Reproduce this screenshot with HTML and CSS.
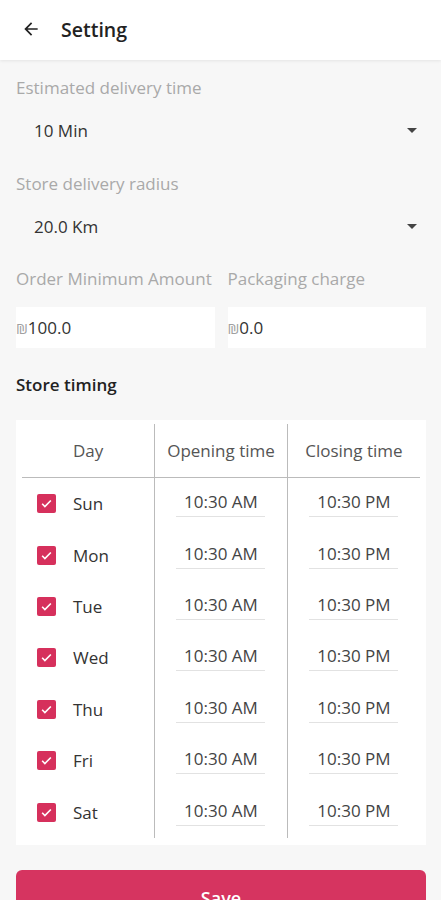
FILE: index.html
```html
<!DOCTYPE html>
<html lang="en">
    <head>
        <meta charset="UTF-8">
        <title>Setting</title>
        <link rel="stylesheet" href="styles.css">
    </head>
<body>

<div class="appbar">
    <svg class="back" width="20" height="20" viewBox="0 0 24 24"><path d="M20 11H7.83l5.59-5.59L12 4l-8 8 8 8 1.41-1.41L7.83 13H20v-2z" fill="#222"/></svg>
    <span class="title">Setting</span>
</div>

<div class="content">
    <div class="label first">Estimated delivery time</div>
    <div class="select">
        <span>10 Min</span>
        <span class="caret"></span>
    </div>

    <div class="label">Store delivery radius</div>
    <div class="select">
        <span>20.0 Km</span>
        <span class="caret"></span>
    </div>

    <div class="pair">
        <div class="pair-item">
            <div class="label">Order Minimum Amount</div>
            <div class="input"><span class="cur">₪</span>100.0</div>
        </div>
        <div class="pair-item">
            <div class="label">Packaging charge</div>
            <div class="input"><span class="cur">₪</span>0.0</div>
        </div>
    </div>

    <div class="section-title">Store timing</div>

    <div class="card">
        <table id="timingTable">
            <thead>
                <tr>
                    <th>Day</th>
                    <th>Opening time</th>
                    <th>Closing time</th>
                </tr>
            </thead>
            <tbody>
                <!-- rows filled by script -->
            </tbody>
        </table>
    </div>

    <button class="save">Save</button>
</div>

<script>
    const days = ['Sun', 'Mon', 'Tue', 'Wed', 'Thu', 'Fri', 'Sat'];

    const tbody = document.querySelector('#timingTable tbody');
    days.forEach(day => {
        tbody.innerHTML += `<tr>
            <td><div class="day"><span class="check"><svg width="13" height="13" viewBox="0 0 24 24"><path d="M4 12.5l5 5L20 6.5" fill="none" stroke="#fff" stroke-width="3"/></svg></span>${day}</div></td>
            <td><span class="time">10:30 AM</span></td>
            <td><span class="time">10:30 PM</span></td>
        </tr>`;
    });
</script>

</body>
</html>
```

FILE: styles.css
```css
body {
    margin: 0;
    font-family: "Open Sans", Lato, sans-serif;
    background-color: #f7f7f7;
    color: #333;
}
.appbar {
    height: 60px;
    background-color: #fff;
    display: flex;
    align-items: center;
    padding-left: 21px;
    box-shadow: 0 1px 3px rgba(0, 0, 0, 0.08);
}
.back {
    margin-right: 20px;
    margin-top: -2px;
}
.title {
    font-size: 19.5px;
    font-weight: 600;
    color: #222;
    margin-top: -2px;
}
.content {
    padding: 0 15px 0 16px;
}
.label {
    font-size: 17px;
    line-height: 20px;
    color: #a9a9a9;
    margin-top: 24px;
}
.label.first {
    margin-top: 18px;
}
.select {
    height: 40px;
    margin-top: 12px;
    display: flex;
    align-items: center;
    justify-content: space-between;
    padding: 0 9px 0 18px;
    font-size: 17px;
    color: #333;
}
.caret {
    width: 0;
    height: 0;
    border-left: 5px solid transparent;
    border-right: 5px solid transparent;
    border-top: 5px solid #444;
}
.pair {
    display: flex;
    gap: 13px;
}
.pair-item {
    flex: 1;
}
.pair .label {
    margin-top: 23px;
}
.input {
    margin-top: 18px;
    height: 41px;
    background-color: #fff;
    display: flex;
    align-items: center;
    font-size: 17px;
    color: #333;
}
.cur {
    font-size: 15px;
    color: #a0a0a0;
}
.section-title {
    margin-top: 27px;
    font-size: 17px;
    line-height: 20px;
    font-weight: 600;
    color: #222;
}
.card {
    margin-top: 25px;
    background-color: #fff;
    padding: 4px 6px 7px;
}
table {
    width: 100%;
    border-collapse: collapse;
    table-layout: fixed;
}
th {
    height: 51px;
    font-weight: normal;
    font-size: 17px;
    color: #555;
    border-bottom: 1px solid #bbb;
}
th + th, td + td {
    border-left: 1px solid #bbb;
}
td {
    height: 51.4px;
    text-align: center;
    font-size: 17px;
    color: #333;
    padding: 0;
}
.day {
    display: flex;
    align-items: center;
    padding-left: 15px;
}
.check {
    width: 19px;
    height: 19px;
    border-radius: 2px;
    background-color: #d6305c;
    display: flex;
    align-items: center;
    justify-content: center;
    margin-right: 17px;
}
.time {
    display: inline-block;
    width: 89px;
    padding-bottom: 3px;
    border-bottom: 1px solid #e2e2e2;
    color: #444;
}
.save {
    margin-top: 25px;
    width: 100%;
    height: 56px;
    border: none;
    border-radius: 6px;
    background-color: #d63460;
    color: #fff;
    font-family: inherit;
    font-size: 18px;
    font-weight: 600;
    margin-bottom: 20px;
}
```
